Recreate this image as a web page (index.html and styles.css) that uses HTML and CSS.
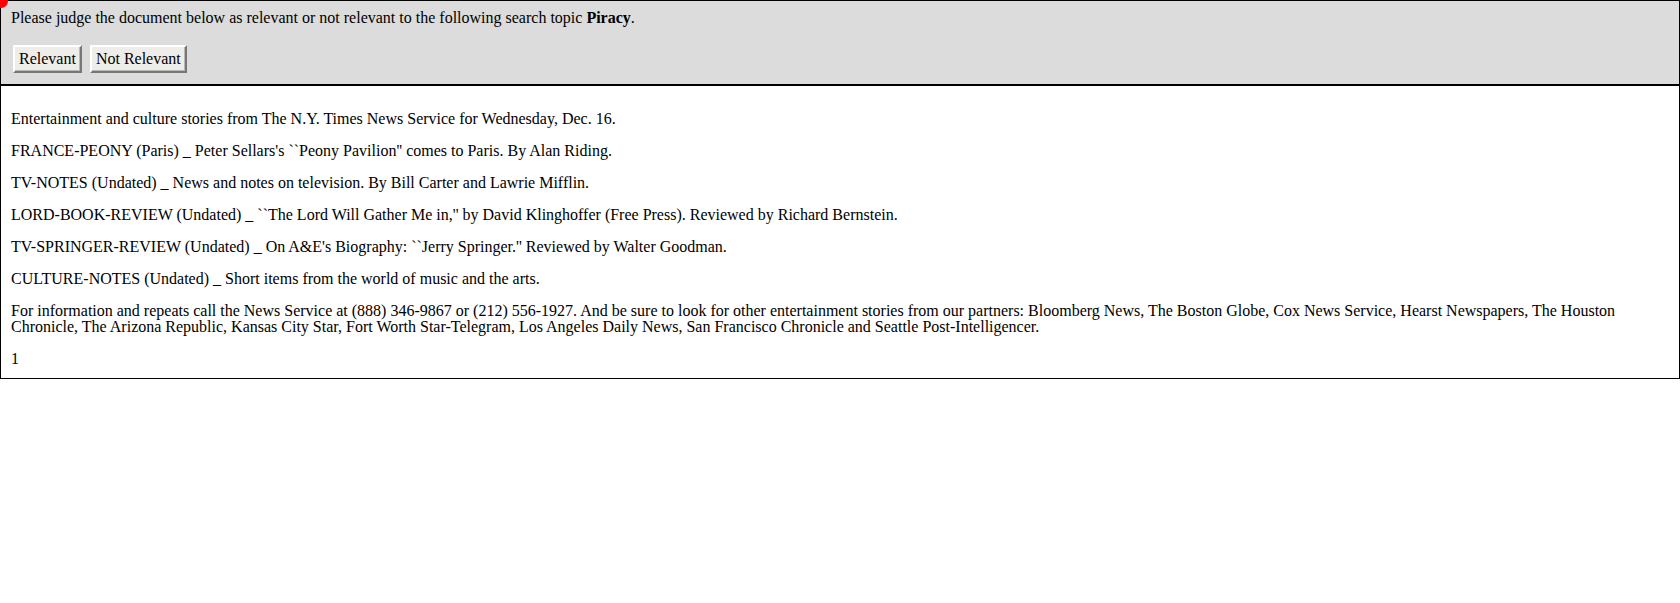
FILE: index.html
```html
<!DOCTYPE html>
<html>
<head>
<meta charset="utf-8">
<link rel="stylesheet" href="styles.css">
</head>
<body>
<span class="dot"></span>
<div class="judge">
  <div class="prompt">Please judge the document below as relevant or not relevant to the following search topic <b>Piracy</b>.</div>
  <div class="actions">
    <button class="btn">Relevant</button>
    <button class="btn">Not Relevant</button>
  </div>
</div>
<div class="doc">
  <p>Entertainment and culture stories from The N.Y. Times News Service for Wednesday, Dec. 16.</p>
  <p>FRANCE-PEONY (Paris) _ Peter Sellars's ``Peony Pavilion'' comes to Paris. By Alan Riding.</p>
  <p>TV-NOTES (Undated) _ News and notes on television. By Bill Carter and Lawrie Mifflin.</p>
  <p>LORD-BOOK-REVIEW (Undated) _ ``The Lord Will Gather Me in,'' by David Klinghoffer (Free Press). Reviewed by Richard Bernstein.</p>
  <p>TV-SPRINGER-REVIEW (Undated) _ On A&amp;E's Biography: ``Jerry Springer.'' Reviewed by Walter Goodman.</p>
  <p>CULTURE-NOTES (Undated) _ Short items from the world of music and the arts.</p>
  <p>For information and repeats call the News Service at (888) 346-9867 or (212) 556-1927. And be sure to look for other entertainment stories from our partners: Bloomberg News, The Boston Globe, Cox News Service, Hearst Newspapers, The Houston Chronicle, The Arizona Republic, Kansas City Star, Fort Worth Star-Telegram, Los Angeles Daily News, San Francisco Chronicle and Seattle Post-Intelligencer.</p>
  <div class="page">1</div>
</div>
</body>
</html>
```

FILE: styles.css
```css
html, body {
  margin: 0;
  padding: 0;
  background: #ffffff;
}
body {
  font-family: "Liberation Serif", "Times New Roman", serif;
  font-size: 16px;
  line-height: 16px;
  color: #000;
  position: relative;
}
.dot {
  position: absolute;
  left: -6px;
  top: -6px;
  width: 14px;
  height: 14px;
  border-radius: 50%;
  background: #f00;
  z-index: 2;
}
.judge {
  background: #dcdcdc;
  border: 1px solid #000;
  border-bottom: 0;
  padding: 9px 10px 11px;
}
.actions {
  display: flex;
  gap: 8px;
  margin-top: 19px;
  padding-left: 2px;
}
.btn {
  font-family: "Liberation Serif", "Times New Roman", serif;
  font-size: 16px;
  line-height: 16px;
  height: 28px;
  padding: 0 4px;
  margin: 0;
  background: #efede9;
  color: #000;
  border: 2px solid;
  border-color: #ffffff #777777 #777777 #ffffff;
  box-shadow: inset -1px -1px 0 #b8b8b8;
}
.doc {
  border: 1px solid #000;
  border-top-width: 2px;
  padding: 9px 10px 11px;
}
.doc p {
  margin: 16px 0;
}
.doc .page {
  margin-top: 16px;
}
```
